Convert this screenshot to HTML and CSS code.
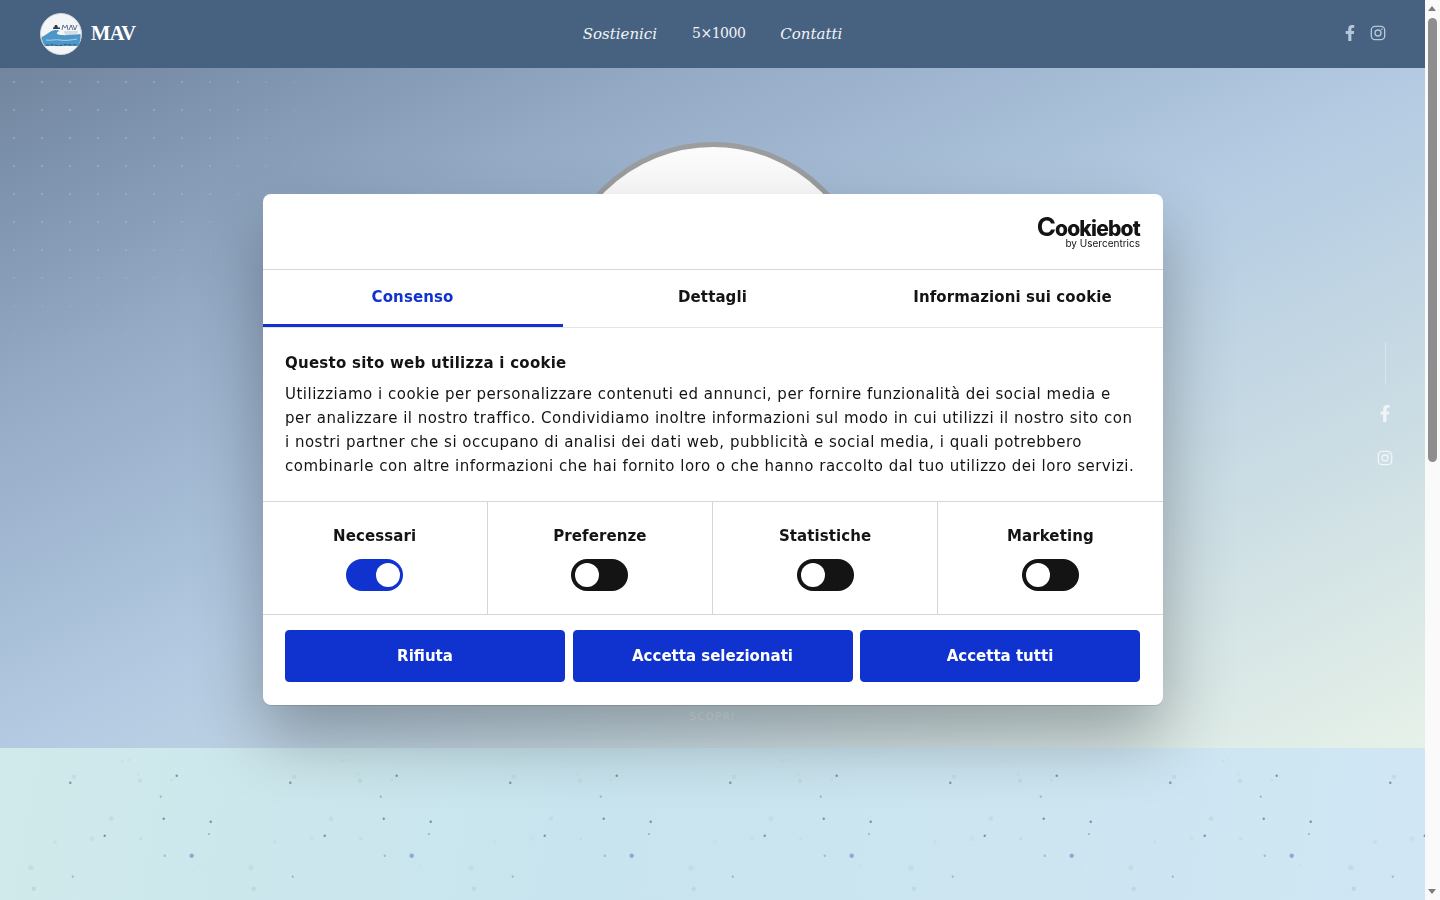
FILE: index.html
```html
<!DOCTYPE html>
<html lang="it">
<head>
    <meta charset="UTF-8">
    <meta name="viewport" content="width=device-width, initial-scale=1.0">
    <title>MAV</title>
    <link rel="stylesheet" href="styles.css">
</head>
<body>
    <svg class="defs" width="0" height="0" aria-hidden="true">
        <defs>
            <symbol id="icon-facebook" viewBox="0 0 320 512">
                <path d="M279 288l14-93h-89v-60c0-25 12-50 52-50h41V6s-37-6-72-6c-73 0-121 44-121 125v70H23v93h81v224h100V288z"/>
            </symbol>
            <symbol id="icon-instagram" viewBox="0 0 24 24">
                <rect x="2" y="2" width="20" height="20" rx="5.5" fill="none" stroke="currentColor" stroke-width="2"/>
                <circle cx="12" cy="12" r="4.5" fill="none" stroke="currentColor" stroke-width="2"/>
                <circle cx="17.8" cy="6.2" r="1.2" fill="currentColor"/>
            </symbol>
        </defs>
    </svg>

    <div class="page">
        <header class="site-header">
            <a class="brand" href="#">
                <svg class="brand-logo" viewBox="0 0 42 42" aria-hidden="true">
                    <circle cx="21" cy="21" r="20.5" fill="#f4f5f6" stroke="#cfd6de"/>
                    <path d="M1.500 24c3-1 6-4 10-6 3-1.500 6-1.500 8 0-2 .5-3 1.500-2.500 3 5 2 12 1 23.500 0 .3 4-.5 8-2 12H5c-2-3-3.300-6-3.500-9z" fill="#4d96c8"/>
                    <path d="M6 27c5 1 9-1 14 0s11 0 17-1" fill="none" stroke="#a9d2e8" stroke-width="1"/>
                    <path d="M6 32c4 1 6-1 9 0s5 1 8 0 6 0 9 0 4-1 5 0" fill="none" stroke="#27415c" stroke-width=".8" stroke-dasharray="3 1.500"/>
                    <path d="M13 14.500h7v1.500h-7zM15 12h2l1 2.500h-4z" fill="#2d3f55"/>
                    <path d="M22 17l1-5 2 3 2-3 1 5M29 17l2-5 2 5M33 12l2 5 2-5" fill="none" stroke="#3a5878" stroke-width=".8"/>
                    <path d="M24 19h14M25 21h12" stroke="#9db0c0" stroke-width=".7"/>
                </svg>
                <span class="brand-name">MAV</span>
            </a>
            <nav class="main-nav">
                <a class="nav-em" href="#">Sostienici</a>
                <a href="#">5×1000</a>
                <a class="nav-em" href="#">Contatti</a>
            </nav>
            <div class="header-social">
                <svg class="icon-fb"><use href="#icon-facebook"/></svg>
                <svg class="icon-ig"><use href="#icon-instagram"/></svg>
            </div>
        </header>

        <section class="hero">
            <div class="hero-dots"></div>
            <div class="hero-circle"></div>
            <span class="hero-scroll">SCOPRI</span>
            <div class="side-social">
                <span class="side-line"></span>
                <svg class="icon-fb"><use href="#icon-facebook"/></svg>
                <svg class="icon-ig"><use href="#icon-instagram"/></svg>
            </div>
        </section>

        <section class="next-section">
            <svg class="particles" width="100%" height="100%" aria-hidden="true">
                <defs>
                    <pattern id="dots" width="220" height="152" patternUnits="userSpaceOnUse">
                        <circle cx="70.300" cy="34.700" r="1.200" fill="#5f7f93"/>
                        <circle cx="74" cy="28.700" r="2.300" fill="#c0dadf"/>
                        <circle cx="176.700" cy="27.700" r="1.200" fill="#5f7f93"/>
                        <circle cx="140" cy="32.700" r="2.300" fill="#c0dadf"/>
                        <circle cx="138.300" cy="26.300" r="1.800" fill="#c6dfe3"/>
                        <circle cx="171.700" cy="32" r="1.800" fill="#c6dfe3"/>
                        <circle cx="160.700" cy="48.700" r="1.100" fill="#8aa8b8"/>
                        <circle cx="163.700" cy="70.700" r="1.200" fill="#5f7f93"/>
                        <circle cx="210.700" cy="73.700" r="1.200" fill="#5a7a90"/>
                        <circle cx="111" cy="70.700" r="2.400" fill="#bfdae0"/>
                        <circle cx="104.700" cy="87.700" r="1.200" fill="#5f7f93"/>
                        <circle cx="91.700" cy="90.700" r="2.400" fill="#c4dfe4"/>
                        <circle cx="55" cy="94" r="2" fill="#c4dfe4"/>
                        <circle cx="140.700" cy="90.700" r="1.600" fill="#c0dce2"/>
                        <circle cx="209" cy="86" r="1.100" fill="#8aa8b8"/>
                        <circle cx="164.700" cy="107.700" r="1.200" fill="#94b2c1"/>
                        <circle cx="191.700" cy="107.700" r="2.200" fill="#7f9bc4"/>
                        <circle cx="200" cy="117.300" r="1.200" fill="#c4e0e8"/>
                        <circle cx="31" cy="119.700" r="2.600" fill="#bfdae1"/>
                        <circle cx="72.700" cy="128.700" r="1.100" fill="#8aa8b8"/>
                        <circle cx="33.700" cy="140.700" r="2.200" fill="#b5d6e2"/>
                        <circle cx="122.700" cy="13" r="1.300" fill="#c4dfe4"/>
                        <circle cx="128.700" cy="12" r="1.300" fill="#c4dfe4"/>
                    </pattern>
                </defs>
                <rect width="100%" height="100%" fill="url(#dots)" opacity="0.8"/>
            </svg>
        </section>
    </div>

    <aside class="scrollbar">
        <span class="scroll-up"></span>
        <span class="scroll-thumb"></span>
        <span class="scroll-down"></span>
    </aside>

    <div class="cookie-dialog">
        <div class="cookie-top">
            <div class="cookie-logo">
                <span class="logo-word"><span class="logo-c">C</span>ookiebot</span>
                <span class="logo-sub">by Usercentrics</span>
            </div>
        </div>
        <div class="cookie-tabs">
            <a class="cookie-tab active" href="#">Consenso</a>
            <a class="cookie-tab" href="#">Dettagli</a>
            <a class="cookie-tab" href="#">Informazioni sui cookie</a>
        </div>
        <div class="cookie-body">
            <h2>Questo sito web utilizza i cookie</h2>
            <p>Utilizziamo i cookie per personalizzare contenuti ed annunci, per fornire funzionalità dei social media e per analizzare il nostro traffico. Condividiamo inoltre informazioni sul modo in cui utilizzi il nostro sito con i nostri partner che si occupano di analisi dei dati web, pubblicità e social media, i quali potrebbero combinarle con altre informazioni che hai fornito loro o che hanno raccolto dal tuo utilizzo dei loro servizi.</p>
        </div>
        <div class="cookie-toggles">
            <div class="toggle-item">
                <strong>Necessari</strong>
                <span class="toggle on"></span>
            </div>
            <div class="toggle-item">
                <strong>Preferenze</strong>
                <span class="toggle"></span>
            </div>
            <div class="toggle-item">
                <strong>Statistiche</strong>
                <span class="toggle"></span>
            </div>
            <div class="toggle-item">
                <strong>Marketing</strong>
                <span class="toggle"></span>
            </div>
        </div>
        <div class="cookie-actions">
            <button>Rifiuta</button>
            <button>Accetta selezionati</button>
            <button>Accetta tutti</button>
        </div>
    </div>
</body>
</html>
```

FILE: styles.css
```css
html, body {
    height: 100%;
    margin: 0;
    overflow: hidden;
}
body {
    display: flex;
    font-family: 'DejaVu Sans', sans-serif;
    background: #fff;
}
.defs {
    position: absolute;
}
.page {
    flex: 1;
    display: flex;
    flex-direction: column;
    min-width: 0;
    height: 900px;
}

/* header */
.site-header {
    height: 68px;
    flex: none;
    display: grid;
    grid-template-columns: 1fr auto 1fr;
    align-items: center;
    padding: 0 40px;
    background: #476281;
    box-sizing: border-box;
}
.brand {
    display: flex;
    align-items: center;
    gap: 9px;
    text-decoration: none;
}
.brand-logo {
    width: 42px;
    height: 42px;
}
.brand-name {
    font-family: 'Liberation Serif', serif;
    font-weight: bold;
    font-size: 20.500px;
    letter-spacing: -0.6px;
    padding-bottom: 2px;
    color: #fff;
}
.main-nav {
    display: flex;
    gap: 35px;
    padding-bottom: 1px;
}
.main-nav a {
    font-family: 'DejaVu Serif', serif;
    font-size: 14px;
    letter-spacing: -0.5px;
    color: #f1f4f8;
    text-decoration: none;
}
.main-nav .nav-em {
    font-size: 15px;
    font-style: italic;
    letter-spacing: 0;
}
.header-social {
    display: flex;
    align-items: center;
    justify-self: end;
    gap: 15px;
    margin-right: -1px;
    padding-bottom: 3px;
    color: #b6c7dc;
}
.icon-fb {
    display: block;
    width: 10px;
    height: 16px;
    fill: currentColor;
}
.icon-ig {
    display: block;
    width: 16px;
    height: 16px;
}

/* hero */
.hero {
    height: 680px;
    flex: none;
    position: relative;
    overflow: hidden;
    display: flex;
    justify-content: center;
    padding-top: 74px;
    box-sizing: border-box;
    background: linear-gradient(to bottom right, #71859f 0%, #95abc6 25%, #b3cae2 50%, #cbdde4 75%, #e6f1e8 100%);
}
.hero-dots {
    position: absolute;
    inset: 0;
    background-image: radial-gradient(circle, rgba(255,255,255,0.2) 1px, transparent 1.500px);
    background-size: 28px 28px;
    -webkit-mask-image: radial-gradient(circle at 40px 0, #000 0, #000 120px, transparent 320px);
    mask-image: radial-gradient(circle at 40px 0, #000 0, #000 120px, transparent 320px);
}
.hero-circle {
    width: 316px;
    height: 316px;
    flex: none;
    box-sizing: border-box;
    border: 5px solid #9b9d9f;
    border-radius: 50%;
    background: #fbfbfb;
}
.hero-scroll {
    position: absolute;
    left: 0;
    right: 0;
    top: 643px;
    text-align: center;
    font-size: 10px;
    letter-spacing: 1.500px;
    color: rgba(255,255,255,0.35);
}
.side-social {
    position: absolute;
    right: 32px;
    top: 274px;
    display: flex;
    flex-direction: column;
    align-items: center;
    gap: 21px;
    color: rgba(255,255,255,0.7);
}
.side-line {
    width: 1px;
    height: 42px;
    background: rgba(255,255,255,0.35);
}
.side-social .icon-fb {
    width: 12px;
    height: 17px;
}
.side-social .icon-ig {
    width: 16px;
    height: 16px;
    margin-top: 7px;
}

/* next section */
.next-section {
    flex: 1;
    background: linear-gradient(100deg, #d0eaeb 0%, #c8e4ee 40%, #d0e6f4 100%);
}
.particles {
    display: block;
}

/* scrollbar */
.scrollbar {
    width: 15px;
    flex: none;
    position: relative;
    background: #fafafa;
}
.scroll-thumb {
    position: absolute;
    left: 3px;
    top: 18px;
    width: 9px;
    height: 444px;
    border-radius: 5px;
    background: #8e8e8e;
}
.scroll-up, .scroll-down {
    position: absolute;
    left: 3px;
    width: 0;
    height: 0;
    border-left: 4.500px solid transparent;
    border-right: 4.500px solid transparent;
}
.scroll-up {
    top: 6px;
    border-bottom: 5px solid #7d7d7d;
}
.scroll-down {
    bottom: 6px;
    border-top: 5px solid #7d7d7d;
}

/* cookie dialog */
.cookie-dialog {
    position: fixed;
    left: 262.500px;
    top: 194px;
    width: 900px;
    height: 511px;
    box-sizing: border-box;
    display: flex;
    flex-direction: column;
    background: #fff;
    border-radius: 8px;
    box-shadow: 0 1px 0 rgba(0,0,0,0.12), 0 32px 68px rgba(0,0,0,0.3);
    color: #141414;
    font-size: 15px;
    letter-spacing: 0.1px;
}
.cookie-top {
    height: 76px;
    flex: none;
    display: flex;
    justify-content: flex-end;
    padding: 24px 22.500px 0 0;
    box-sizing: border-box;
    border-bottom: 1px solid #d6d6d6;
}
.cookie-logo {
    display: flex;
    flex-direction: column;
    align-items: flex-end;
    color: #141414;
}
.logo-word {
    font-family: Inter, sans-serif;
    font-weight: 800;
    font-size: 21px;
    line-height: 18px;
    letter-spacing: -0.8px;
}
.logo-c {
    font-size: 26px;
    font-weight: 700;
    line-height: 18px;
    letter-spacing: -1px;
}
.logo-sub {
    font-family: Inter, sans-serif;
    font-size: 10px;
    line-height: 11px;
    letter-spacing: 0;
}
.cookie-tabs {
    height: 58px;
    flex: none;
    display: flex;
    box-sizing: border-box;
    border-bottom: 1px solid #e4e4e4;
}
.cookie-tab {
    flex: 1;
    display: flex;
    align-items: center;
    justify-content: center;
    font-weight: bold;
    color: #141414;
    text-decoration: none;
    height: 57px;
    box-sizing: border-box;
    border-bottom: 3px solid transparent;
}
.cookie-tab.active {
    color: #1032cf;
    border-bottom-color: #1032cf;
}
.cookie-body {
    height: 173px;
    flex: none;
    box-sizing: border-box;
    padding: 23px 22.500px 0;
}
.cookie-body h2 {
    margin: 0 0 7px;
    font-size: 15px;
    line-height: 24px;
    font-weight: bold;
    letter-spacing: 0.25px;
}
.cookie-body p {
    margin: 0;
    line-height: 24px;
    letter-spacing: 0.5px;
}
.cookie-toggles {
    height: 114px;
    flex: none;
    display: flex;
    box-sizing: border-box;
    border-top: 1px solid #d6d6d6;
    border-bottom: 1px solid #d6d6d6;
}
.toggle-item {
    flex: 1 1 0;
    box-sizing: border-box;
    display: flex;
    flex-direction: column;
    align-items: center;
    padding-top: 23px;
    gap: 12px;
    line-height: 22px;
    border-right: 1px solid #d6d6d6;
}
.toggle-item:last-child {
    border-right: 0;
}
.toggle {
    display: block;
    width: 57px;
    height: 32px;
    border-radius: 16px;
    background: #141414;
    position: relative;
}
.toggle::after {
    content: "";
    position: absolute;
    top: 4px;
    left: 4px;
    width: 24px;
    height: 24px;
    border-radius: 50%;
    background: #fff;
}
.toggle.on {
    background: #1032cf;
}
.toggle.on::after {
    left: 30px;
}
.cookie-actions {
    display: flex;
    gap: 7.500px;
    padding: 15px 22.500px 0;
}
.cookie-actions button {
    flex: 1 1 0;
    height: 52px;
    border: 1px solid #1032cf;
    border-radius: 4px;
    background: #1032cf;
    color: #fff;
    font-family: 'DejaVu Sans', sans-serif;
    font-size: 15px;
    font-weight: bold;
}
```
